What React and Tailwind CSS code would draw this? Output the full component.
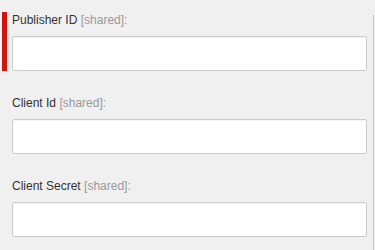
import React from "react";

function Field({ label, active }) {
  return (
    <div className="flex">
      <div className={`w-[5px] ${active ? "bg-[#d2140f]" : "bg-transparent"}`} />
      <div className="ml-[5px] w-[355px] flex flex-col">
        <div className="h-[24px] pt-[1px] text-[12px] leading-[14px] text-[#333333]">
          {label} <span className="text-[#999999]">[shared]:</span>
        </div>
        <div className="h-[35px] bg-white border border-[#cccccc] rounded-[2px] shadow-[inset_0_1px_1px_rgba(0,0,0,0.05)]" />
      </div>
    </div>
  );
}

export default function App() {
  return (
    <div
      className="w-[375px] h-[250px] bg-[#f0f0f0] flex overflow-hidden"
      style={{ fontFamily: '"Liberation Sans", Arial, sans-serif' }}
    >
      <div className="w-[373px] pl-[2px] pt-[12px] flex flex-col gap-[24px]">
        <Field label="Publisher ID" active />
        <Field label="Client Id" />
        <Field label="Client Secret" />
      </div>
      <div className="w-[1px] mt-[15px] bg-[#c8c8c8]" />
    </div>
  );
}
